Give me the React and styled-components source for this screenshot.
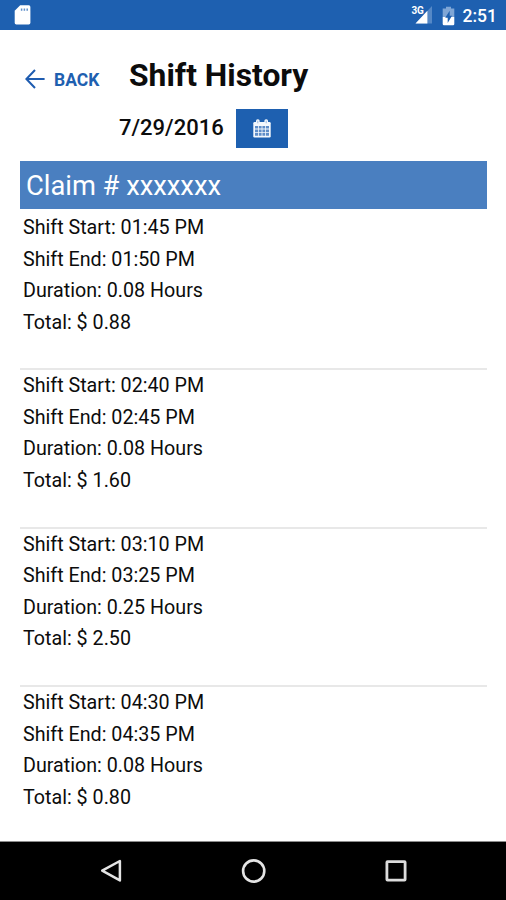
import React from "react";
import styled, { createGlobalStyle, ThemeProvider } from "styled-components";

const theme = {
  colors: {
    primary: "#1e60b0",
    claim: "#4a7fc0",
    text: "#0c0c0c",
    line: "#e8e8e8",
  },
};

const shifts = [
  { start: "01:45 PM", end: "01:50 PM", duration: "0.08", total: "0.88" },
  { start: "02:40 PM", end: "02:45 PM", duration: "0.08", total: "1.60" },
  { start: "03:10 PM", end: "03:25 PM", duration: "0.25", total: "2.50" },
  { start: "04:30 PM", end: "04:35 PM", duration: "0.08", total: "0.80" },
];

const SdCardIcon = () => (
  <svg width="17" height="20" viewBox="0 0 17 20">
    <path
      d="M6.2 0.3H14.8Q16.4 0.3 16.4 1.9V17.8Q16.4 19.5 14.7 19.5H2.3Q0.7 19.5 0.7 17.8V5.8Z"
      fill="#fff"
    />
    <path d="M7.6 3.4V5.8M10.4 3.4V5.8M13.2 3.4V5.8" stroke="#5f8fca" strokeWidth="1.5" />
  </svg>
);

const SignalIcon = () => (
  <svg width="18" height="19" viewBox="0 0 18 19">
    <path d="M17 1V18.4H0.5Z" fill="#5588c6" />
    <path d="M12.4 5.8V18.4H0.5Z" fill="#fff" />
  </svg>
);

const BatteryIcon = () => (
  <svg width="13" height="20" viewBox="0 0 13 20">
    <path d="M4 0.7H9V2.5H12.3V11H0.7V2.5H4Z" fill="#7fa6d6" />
    <path d="M0.7 11H12.3V17.7Q12.3 19.2 11 19.2H2Q0.7 19.2 0.7 17.7Z" fill="#fff" />
    <path d="M7.7 4.8L3.2 11.8H5.7V17L10 9.8H7.7Z" fill="#1e60b0" />
  </svg>
);

const ArrowIcon = () => (
  <svg width="20" height="20" viewBox="0 0 20 20">
    <path
      d="M19.6 10H1.6M10 1L1.4 10L10 19"
      fill="none"
      stroke="#1e5cb0"
      strokeWidth="2"
    />
  </svg>
);

const CalendarIcon = () => (
  <svg width="18" height="19" viewBox="0 0 18 19">
    <rect x="0.3" y="3" width="17.4" height="15.6" rx="1.3" fill="#f4f8fd" />
    <rect x="3" y="0.2" width="3.6" height="5.2" rx="1.6" fill="#f4f8fd" />
    <rect x="11.4" y="0.2" width="3.6" height="5.2" rx="1.6" fill="#f4f8fd" />
    <path d="M4.8 1.7V4.3M13.2 1.7V4.3" stroke="#8fb1da" strokeWidth="0.9" />
    <path
      d="M2 7H5V9.6H2ZM5.8 7H8.6V9.6H5.8ZM9.4 7H12.2V9.6H9.4ZM13 7H16V9.6H13ZM2 10.4H5V13.2H2ZM5.8 10.4H8.6V13.2H5.8ZM9.4 10.4H12.2V13.2H9.4ZM13 10.4H16V13.2H13ZM2 14H5V16.8H2ZM5.8 14H8.6V16.8H5.8ZM9.4 14H12.2V16.8H9.4ZM13 14H16V16.8H13Z"
      fill="#5f8dc8"
    />
  </svg>
);

const NavBackIcon = () => (
  <svg width="24" height="26" viewBox="0 0 24 26">
    <path
      d="M20.9 3V22.4L3.2 12.7Z"
      fill="none"
      stroke="#e4e4e4"
      strokeWidth="2.5"
      strokeLinejoin="round"
    />
  </svg>
);

const NavHomeIcon = () => (
  <svg width="26" height="26" viewBox="0 0 26 26">
    <circle cx="12.7" cy="13" r="10.6" fill="none" stroke="#e4e4e4" strokeWidth="2.6" />
  </svg>
);

const NavRecentIcon = () => (
  <svg width="22" height="22" viewBox="0 0 22 22">
    <rect
      x="1.9"
      y="1.7"
      width="18.2"
      height="18.4"
      rx="0.6"
      fill="none"
      stroke="#dcdcdc"
      strokeWidth="2.8"
    />
  </svg>
);

const Shift = ({ start, end, duration, total }) => (
  <ShiftItem>
    <ShiftLine>Shift Start: {start}</ShiftLine>
    <ShiftLine>Shift End: {end}</ShiftLine>
    <ShiftLine>Duration: {duration} Hours</ShiftLine>
    <ShiftLine>Total: $ {total}</ShiftLine>
  </ShiftItem>
);

const App = () => (
  <ThemeProvider theme={theme}>
    <GlobalStyle />
    <Screen>
      <StatusBar>
        <SdCardIcon />
        <StatusGroup>
          <Network>3G</Network>
          <SignalIcon />
          <Battery>
            <BatteryIcon />
          </Battery>
          <Clock>2:51</Clock>
        </StatusGroup>
      </StatusBar>
      <Content>
        <Header>
          <BackButton>
            <ArrowIcon />
            <BackLabel>BACK</BackLabel>
          </BackButton>
          <Title>Shift History</Title>
        </Header>
        <DateRow>
          <DateText>7/29/2016</DateText>
          <CalendarButton aria-label="Pick a date">
            <CalendarIcon />
          </CalendarButton>
        </DateRow>
        <Claim>Claim # xxxxxxx</Claim>
        <ShiftList>
          {shifts.map((shift) => (
            <Shift key={shift.start} {...shift} />
          ))}
        </ShiftList>
      </Content>
      <NavBar>
        <NavBackIcon />
        <NavHomeIcon />
        <NavRecentIcon />
      </NavBar>
    </Screen>
  </ThemeProvider>
);

const GlobalStyle = createGlobalStyle`
  * {
    box-sizing: border-box;
  }

  body {
    margin: 0;
    background: #fff;
    font-family: Roboto, sans-serif;
  }

  svg {
    display: block;
    flex-shrink: 0;
  }
`;

const Screen = styled.div`
  display: flex;
  flex-direction: column;
  height: 900px;
  overflow: hidden;
  background: #fff;
  color: ${({ theme }) => theme.colors.text};
`;

const StatusBar = styled.div`
  display: flex;
  justify-content: space-between;
  height: 30px;
  flex-shrink: 0;
  padding: 5px 9px 0 14px;
  background: ${({ theme }) => theme.colors.primary};
  color: #fff;
`;

const StatusGroup = styled.div`
  display: flex;
`;

const Network = styled.span`
  margin-right: -9px;
  z-index: 1;
  font-size: 10px;
  line-height: 12px;
  font-weight: 700;
  letter-spacing: -0.3px;
`;

const Battery = styled.div`
  margin: 1px 0 0 9px;
`;

const Clock = styled.span`
  margin-left: 8px;
  font-size: 17.5px;
  line-height: 22px;
  font-weight: 500;
`;

const Content = styled.main`
  flex: 1;
  min-height: 0;
  padding: 0 19px 0 20px;
`;

const Header = styled.div`
  display: flex;
  height: 78px;
`;

const BackButton = styled.button`
  display: flex;
  align-items: flex-start;
  width: 109px;
  padding: 39px 0 0 5px;
  border: none;
  background: none;
  font-family: inherit;
  color: ${({ theme }) => theme.colors.primary};
`;

const BackLabel = styled.span`
  margin-left: 9px;
  font-size: 17.5px;
  line-height: 22px;
  font-weight: 700;
`;

const Title = styled.h1`
  margin: 25px 0 0;
  font-size: 31.8px;
  line-height: 40px;
  font-weight: 700;
  white-space: nowrap;
`;

const DateRow = styled.div`
  display: flex;
  height: 52.5px;
  padding: 1px 0 0 99px;
`;

const DateText = styled.span`
  width: 117px;
  font-size: 22px;
  line-height: 38px;
  font-weight: 500;
`;

const CalendarButton = styled.button`
  display: flex;
  align-items: center;
  justify-content: center;
  width: 52px;
  height: 39px;
  padding: 0;
  border: none;
  background: ${({ theme }) => theme.colors.primary};
`;

const Claim = styled.div`
  height: 48.5px;
  padding-left: 6px;
  background: ${({ theme }) => theme.colors.claim};
  color: #fff;
  font-size: 27.3px;
  line-height: 51px;
`;

const ShiftList = styled.ul`
  margin: 0;
  padding: 3px 0 0;
  list-style: none;
`;

const ShiftItem = styled.li`
  height: 158.4px;
  padding-left: 3px;
  border-bottom: 2px solid ${({ theme }) => theme.colors.line};

  &:last-child {
    border-bottom: none;
  }
`;

const ShiftLine = styled.div`
  font-size: 19.7px;
  line-height: 31.5px;
  white-space: pre;
`;

const NavBar = styled.nav`
  display: flex;
  align-items: center;
  justify-content: space-between;
  height: 59px;
  flex-shrink: 0;
  padding: 0 99px;
  border-top: 1px solid #8c8c8c;
  background: #000;
`;

export default App;
